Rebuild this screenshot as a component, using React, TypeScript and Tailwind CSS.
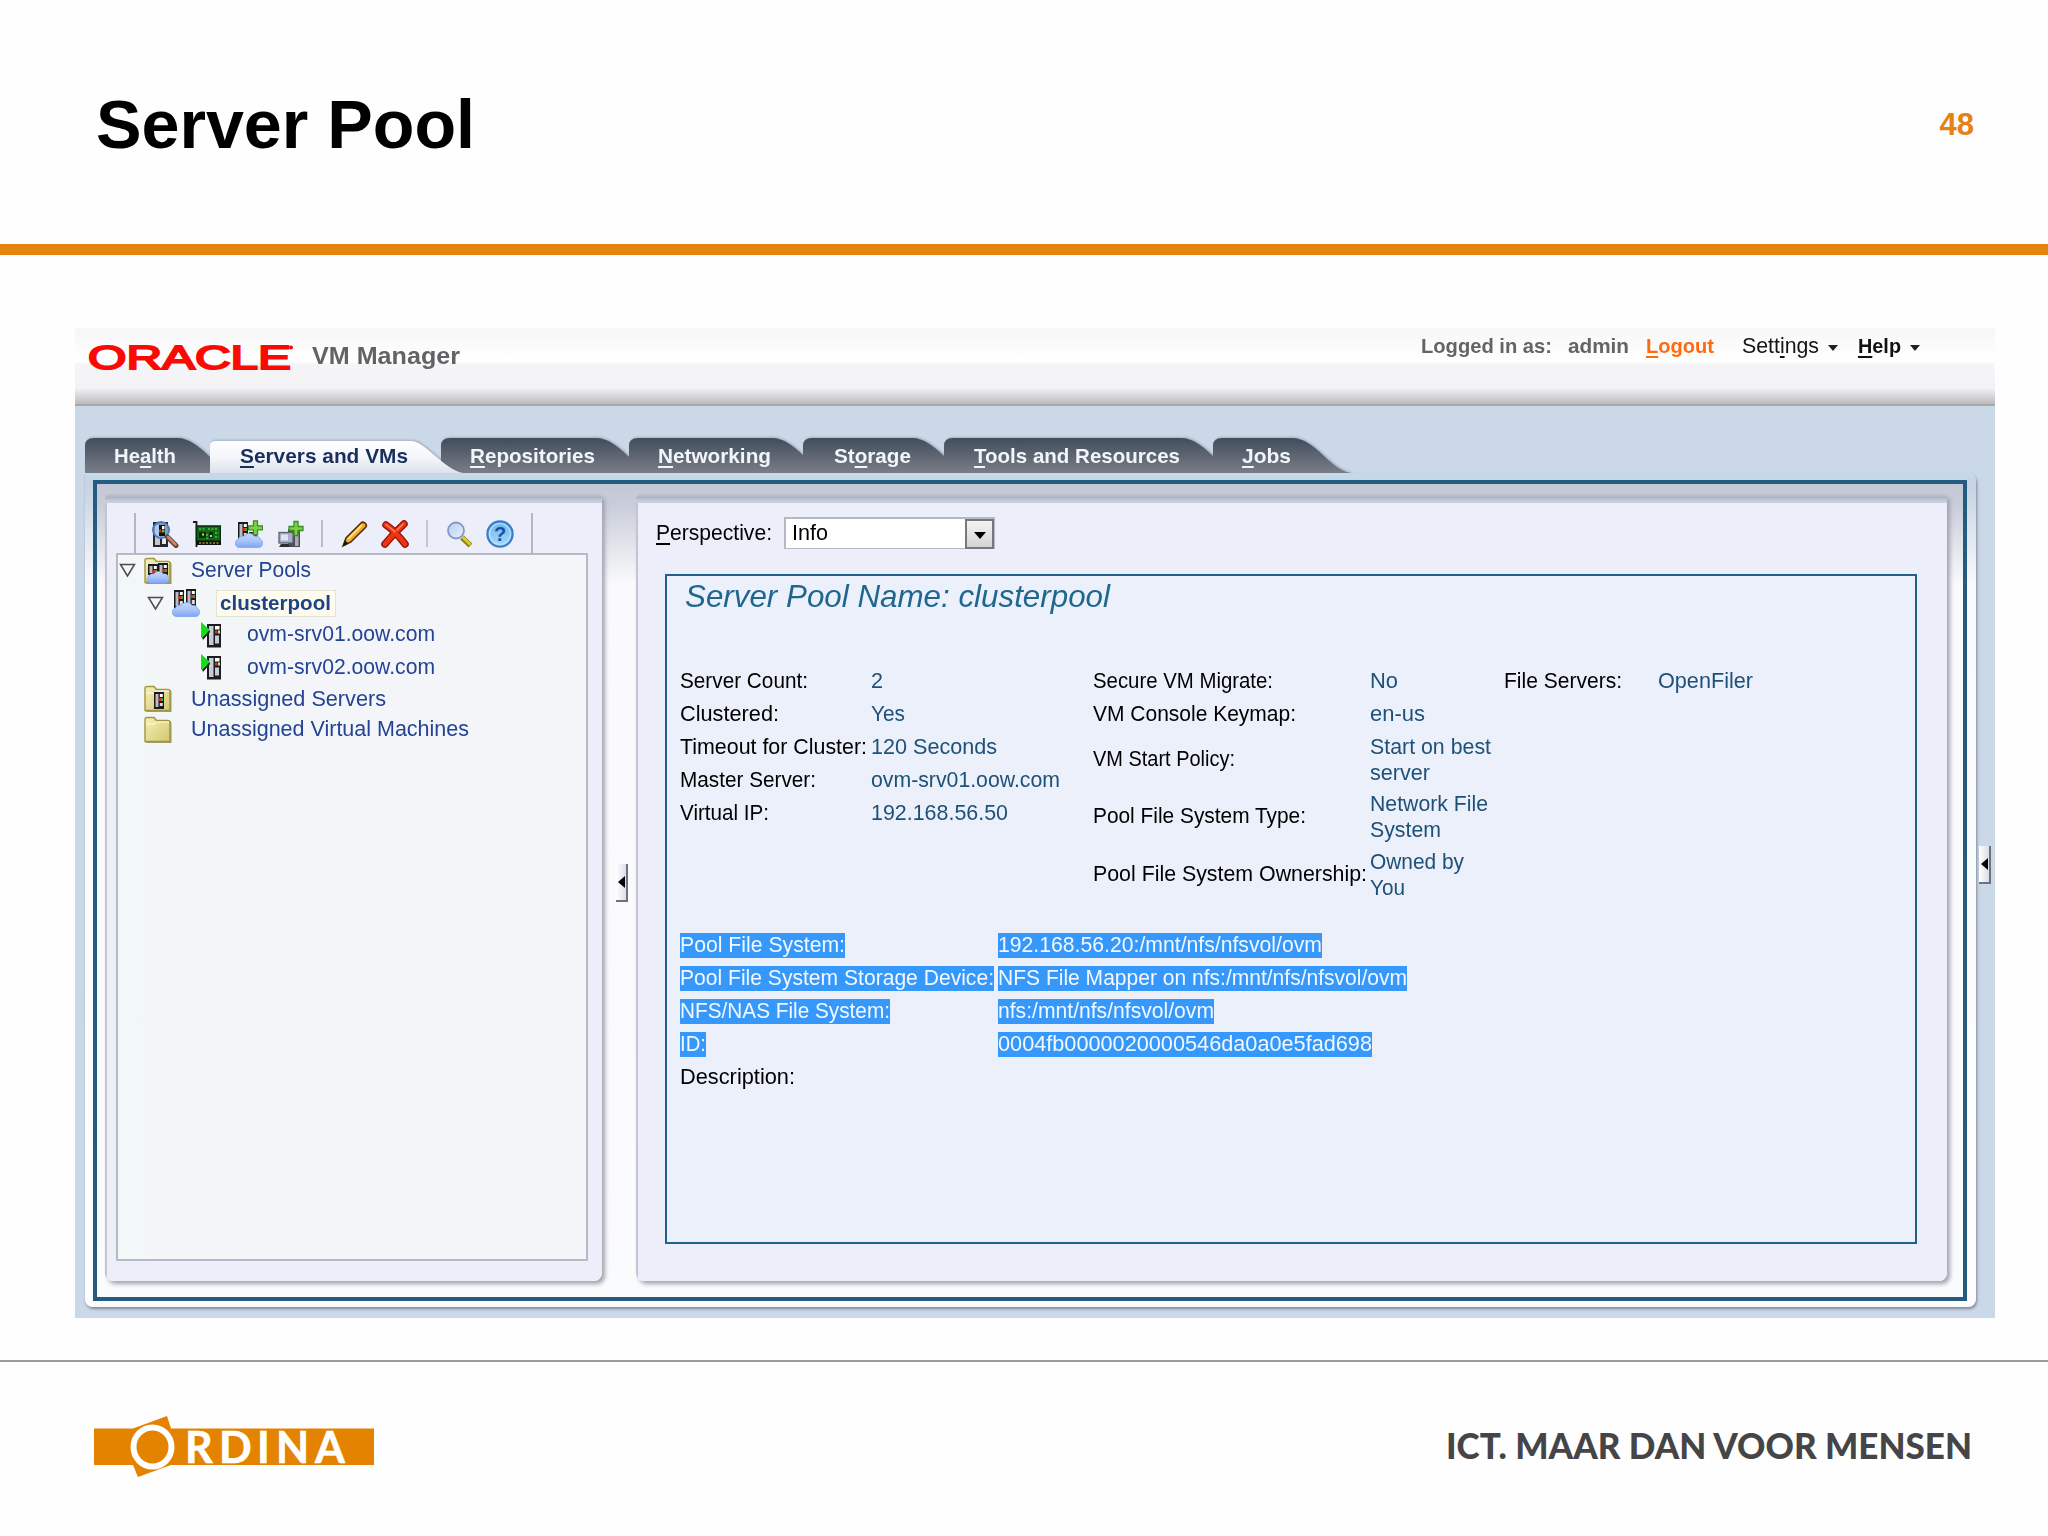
import { useLayoutEffect, useRef, useState, type ReactNode } from "react";
import clsx from "clsx";

/* Text condensed or widened to a given width. */
function Fit({ w, className, children }: { w: number; className?: string; children: ReactNode }) {
  const ref = useRef<HTMLSpanElement>(null);
  const [scale, setScale] = useState(1);
  useLayoutEffect(() => {
    const el = ref.current;
    if (!el) return;
    el.style.transform = "none";
    const next = w / (el.getBoundingClientRect().width || w);
    el.style.transform = `scaleX(${next})`;
    setScale(next);
  }, [w]);
  return (
    <span className={clsx("inline-block align-top whitespace-nowrap", className)} style={{ width: w }}>
      <span ref={ref} className="inline-block origin-left" style={{ transform: `scaleX(${scale})` }}>
        {children}
      </span>
    </span>
  );
}

function Key({ children }: { children: ReactNode }) {
  return <span className="underline decoration-2 underline-offset-[3px]">{children}</span>;
}

/* ---------- icons ---------- */

function Tower({ x, y, h = 22 }: { x: number; y: number; h?: number }) {
  return (
    <g>
      <rect x={x} y={y} width="10" height={h} fill="#1b1b1d" />
      <rect x={x + 1.5} y={y + 2} width="3" height={h - 4} fill="#b9bcc6" />
      <rect x={x + 5.8} y={y + 2} width="3" height="3" fill="#fff" />
      <rect x={x + 4.5} y={y + 6} width="2.5" height="3" fill="#e02a1c" />
      <rect x={x + 7} y={y + 6} width="2" height="3" fill="#2fae2a" />
      <rect x={x + 5.8} y={y + 11} width="3" height={Math.max(2, h - 14)} fill="#d8dae2" />
    </g>
  );
}

function Cloud({ y = 13.5 }: { y?: number }) {
  return (
    <path
      transform={`translate(0 ${y})`}
      d="M4.500 14C-.8 14 -.8 6.500 3.500 5.500C4 3 7 2 9 3C11 -1 18 -1 20 3C23 2 25 4 25 5.500C28.800 7 28.500 14 23.500 14Z"
      fill="url(#cloud)"
      stroke="#7fa3ec"
      strokeWidth=".8"
    />
  );
}

function Plus({ x, y }: { x: number; y: number }) {
  return (
    <path
      transform={`translate(${x} ${y})`}
      d="M5 0H9V5H14V9H9V14H5V9H0V5H5Z"
      fill="#7ed04a"
      stroke="#3c8f1e"
      strokeWidth="1.300"
    />
  );
}

function Folder({ children }: { children?: ReactNode }) {
  return (
    <svg width="28" height="28" viewBox="0 0 28 28" className="block shrink-0">
      <path d="M2 27V4Q2 2 4 2H10.500L13 5H25Q27.500 5 27.500 7V27Z" fill="#6f6a3c" opacity=".65" />
      <path d="M1 25.500V3.500Q1 1.500 3 1.500H10L12.500 4.500H24Q26 4.500 26 6.500V25.500Z" fill="url(#folder)" stroke="#a2963f" strokeWidth="1.400" />
      <path d="M2 8H10L12.500 6H25" fill="none" stroke="#fffde0" strokeWidth="1" />
      {children}
    </svg>
  );
}

function ServerRunning() {
  return (
    <svg width="22" height="26" viewBox="0 0 22 26" className="block shrink-0">
      <rect x="6" y="2" width="14" height="23.500" fill="#1d1d20" />
      <rect x="8" y="4" width="4.500" height="19" fill="#c9ccd6" />
      <rect x="14" y="4" width="4.500" height="3.500" fill="#fff" />
      <rect x="14" y="8.500" width="2.500" height="3" fill="#e02a1c" />
      <rect x="17" y="8.500" width="2" height="3" fill="#b7e8b0" />
      <rect x="14" y="13.500" width="4" height="8" fill="#c9ccd6" />
      <path d="M1 15.500L9 8V10L2 18Z" fill="#222" />
      <path d="M0 0L9 8L0 16Z" fill="#0fe01a" />
    </svg>
  );
}

function Expander() {
  return (
    <svg width="17" height="15" viewBox="0 0 17 15" className="block shrink-0">
      <path d="M1.500 1.500H15.500L8.500 13Z" fill="#f6f6f8" stroke="#4b4b50" strokeWidth="1.500" />
    </svg>
  );
}

function PoolIcon() {
  return (
    <svg width="28" height="28" viewBox="0 0 28 28" className="block shrink-0">
      <Tower x={2} y={1} h={18} />
      <Tower x={14} y={0} h={18} />
      <Cloud />
    </svg>
  );
}

function DiscoverIcon() {
  return (
    <svg width="28" height="28" viewBox="0 0 28 28" className="block">
      <rect x="2" y="2" width="15" height="25" fill="#27272a" />
      <rect x="4" y="5" width="5" height="20" fill="#c4c7d0" />
      <rect x="11" y="16" width="4" height="8" fill="#e8e8ec" />
      <circle cx="10" cy="10" r="8" fill="#a9c8f4" fillOpacity=".75" stroke="#4f79bd" strokeWidth="2" />
      <path d="M8 5H14V16H8Z" fill="#111" />
      <rect x="11" y="6" width="2.500" height="3" fill="#fff" />
      <rect x="8" y="9.500" width="2.500" height="3" fill="#e8261a" />
      <rect x="11" y="9.500" width="2.500" height="3" fill="#42c93a" />
      <path d="M16.500 17L25 25.500" stroke="#6b4130" strokeWidth="5" strokeLinecap="round" />
      <path d="M17 17L24.500 24.500" stroke="#c58a6c" strokeWidth="2.500" strokeLinecap="round" />
    </svg>
  );
}

function NicIcon() {
  return (
    <svg width="28" height="28" viewBox="0 0 28 28" className="block">
      <path d="M0 2H3.500V27" fill="none" stroke="#1c1c1c" strokeWidth="1.800" />
      <rect x="3.500" y="6" width="24" height="15" fill="#0f6b14" stroke="#0b2a0b" strokeWidth="1.500" />
      <rect x="3" y="21" width="25" height="4" fill="#111" />
      <path d="M6 23H26" stroke="#a58d2c" strokeWidth="1.500" strokeDasharray="2 1.500" />
      <rect x="6" y="12" width="7" height="6" fill="#0a2c0d" />
      <rect x="16" y="12" width="4" height="6" fill="#0a2c0d" />
      <path d="M6 9H12M15 9H25M22 13H26M22 17H26M14 14V19" stroke="#4fc44a" strokeWidth="1.500" strokeDasharray="2 1.500" />
      <rect x="9" y="13.500" width="2" height="2" fill="#e6d24a" />
      <rect x="17" y="15" width="2" height="2" fill="#c9ccd6" />
    </svg>
  );
}

function AddPoolIcon() {
  return (
    <svg width="28" height="28" viewBox="0 0 28 28" className="block">
      <Tower x={3} y={2} h={18} />
      <rect x="14" y="12" width="8" height="6" fill="#2a2a2d" />
      <Cloud />
      <Plus x={13.5} y={0.8} />
    </svg>
  );
}

function AddVmIcon() {
  return (
    <svg width="28" height="28" viewBox="0 0 28 28" className="block">
      <rect x="11" y="9" width="12" height="18" fill="#4c4f57" />
      <rect x="18" y="14" width="3.500" height="12" fill="#a9adb7" />
      <rect x="2" y="12.500" width="14" height="10.500" fill="#a9b1c8" stroke="#5d6272" strokeWidth="1.300" />
      <rect x="4" y="14.500" width="7" height="6" fill="#dfe4f2" />
      <path d="M2 27H13L11 24H4Z" fill="#2b2b30" />
      <Plus x={12} y={1.5} />
    </svg>
  );
}

function PencilIcon() {
  return (
    <svg width="28" height="28" viewBox="0 0 28 28" className="block">
      <path d="M2 26L5 18L20 3Q22 1 24.500 3.500Q26.500 5.500 24.500 7.500L10 22Z" fill="#f0a92c" stroke="#4a2a08" strokeWidth="1.500" />
      <path d="M7 19L21 5" stroke="#ffdc86" strokeWidth="2" />
      <path d="M2 26L4 20.500L7.500 23.500Z" fill="#1c1208" />
    </svg>
  );
}

function DeleteIcon() {
  return (
    <svg width="28" height="28" viewBox="0 0 28 28" className="block">
      <path d="M5 5Q14 11 24 24M23 4Q13 13 4 24" fill="none" stroke="#8f1005" strokeWidth="7.500" strokeLinecap="round" />
      <path d="M5 5Q14 11 24 24M23 4Q13 13 4 24" fill="none" stroke="#ee3312" strokeWidth="5" strokeLinecap="round" />
      <path d="M5 4.500Q11 9 14 12M22 4Q19 7 16 10" fill="none" stroke="#ff8466" strokeWidth="1.500" strokeLinecap="round" />
    </svg>
  );
}

function FindIcon() {
  return (
    <svg width="28" height="28" viewBox="0 0 28 28" className="block">
      <path d="M16 17.500L24.500 25.500" stroke="#8d8416" strokeWidth="5.500" />
      <path d="M16.500 17L24.500 24.500" stroke="#d9cb35" strokeWidth="3" />
      <circle cx="10" cy="10.500" r="8" fill="url(#lens)" stroke="#8798be" strokeWidth="1.800" />
    </svg>
  );
}

function HelpIcon() {
  return (
    <svg width="28" height="28" viewBox="0 0 28 28" className="block">
      <circle cx="14" cy="14" r="12.600" fill="url(#help)" stroke="#3a7cc8" strokeWidth="2.200" />
      <circle cx="14" cy="14" r="10.500" fill="none" stroke="#bfe2fb" strokeWidth="1.200" />
      <text x="14" y="21" textAnchor="middle" fontFamily="Liberation Sans, sans-serif" fontWeight="700" fontSize="20" fill="#1752a8">?</text>
    </svg>
  );
}

function Defs() {
  return (
    <svg width="0" height="0" className="absolute">
      <defs>
        <linearGradient id="cloud" x1="0" y1="0" x2="0" y2="1">
          <stop offset="0" stopColor="#c6d8fb" />
          <stop offset=".5" stopColor="#a9c5fb" />
          <stop offset="1" stopColor="#7fa6f4" />
        </linearGradient>
        <linearGradient id="folder" x1="0" y1="0" x2="1" y2="1">
          <stop offset="0" stopColor="#f5f1b8" />
          <stop offset="1" stopColor="#d2c670" />
        </linearGradient>
        <linearGradient id="lens" x1="0" y1="0" x2="1" y2="1">
          <stop offset="0" stopColor="#b4cbf2" />
          <stop offset="1" stopColor="#eaf3fe" />
        </linearGradient>
        <linearGradient id="help" x1="0" y1="0" x2="0" y2="1">
          <stop offset="0" stopColor="#6fb4ee" />
          <stop offset="1" stopColor="#9fdcfb" />
        </linearGradient>
        <linearGradient id="tab" x1="0" y1="0" x2="0" y2="1">
          <stop offset="0" stopColor="#414d5c" />
          <stop offset="1" stopColor="#7a7d88" />
        </linearGradient>
        <linearGradient id="tabOn" x1="0" y1="0" x2="0" y2="1">
          <stop offset="0" stopColor="#ffffff" />
          <stop offset=".5" stopColor="#f4f6fa" />
          <stop offset="1" stopColor="#dde2ec" />
        </linearGradient>
      </defs>
    </svg>
  );
}

/* ---------- top bar and tabs ---------- */

function Caret() {
  return <span className="mt-[3px] ml-[9px] block h-0 w-0 shrink-0 border-x-[5px] border-t-[6px] border-x-transparent border-t-[#222]" />;
}

function TopBar() {
  return (
    <div className="flex h-[78px] shrink-0 items-start bg-[linear-gradient(to_bottom,#f7f7f9_0px,#ffffff_34px,#f5f4f6_36px,#f3f2f5_60px,#bcbabd_76px,#a5aaa8_76px,#a5aaa8_78px)]">
      <svg width="208" height="44" viewBox="0 0 208 44" className="mt-[8px] ml-[12px] block overflow-visible">
        <text
          x="1"
          y="33"
          textLength="203"
          lengthAdjust="spacingAndGlyphs"
          fontFamily="Liberation Sans, sans-serif"
          fontSize="33"
          fill="#fb0a05"
          stroke="#fb0a05"
          strokeWidth="1.900"
        >
          ORACLE
        </text>
        <circle cx="204" cy="11.500" r="2" fill="#fb0a05" />
      </svg>
      <Fit w={148} className="mt-[10px] ml-[17px] text-[24.5px] leading-9 font-bold text-[#636366]">VM Manager</Fit>
      <div className="ml-auto flex h-9 w-[574px] items-center text-[21px] font-bold text-[#646467]">
        <Fit w={131}>Logged in as:</Fit>
        <Fit w={61} className="ml-[16px]">admin</Fit>
        <Fit w={68} className="ml-[17px] text-[#ff6a0f]"><Key>L</Key>ogout</Fit>
        <Fit w={77} className="ml-[28px] text-[21.5px] font-normal text-[#151517]">Sett<Key>i</Key>ngs</Fit>
        <Caret />
        <Fit w={43} className="ml-[20px] text-[#111]"><Key>H</Key>elp</Fit>
        <Caret />
      </div>
    </div>
  );
}

type TabSpec = { pre?: string; key: string; post: string; width: number; textX: number; textW: number; on?: boolean };

const tabs: TabSpec[] = [
  { pre: "He", key: "a", post: "lth", width: 125, textX: 29, textW: 62 },
  { key: "S", post: "ervers and VMs", width: 231, textX: 30, textW: 168, on: true },
  { key: "R", post: "epositories", width: 188, textX: 29, textW: 125 },
  { key: "N", post: "etworking", width: 174, textX: 29, textW: 113 },
  { pre: "St", key: "o", post: "rage", width: 141, textX: 31, textW: 77 },
  { key: "T", post: "ools and Resources", width: 269, textX: 30, textW: 206 },
  { key: "J", post: "obs", width: 139, textX: 29, textW: 49 },
];

function Tab({ tab }: { tab: TabSpec }) {
  const c = tab.textX + tab.textW + 1;
  const y = tab.on ? 3 : 0;
  const d = tab.on
    ? `M0 35V${y + 5}Q0 ${y} 6 ${y}H${c + 2}C${c + 16} ${y} ${c + 34} 31 ${c + 54} 35Z`
    : `M0 35V8Q0 0 9 0H${c}C${c + 24} 0 ${c + 38} 33 ${c + 60} 35Z`;
  return (
    <button
      type="button"
      style={{ width: tab.width, paddingLeft: tab.textX }}
      className={clsx(
        "relative flex h-[35px] shrink-0 items-center text-[21px] font-bold",
        tab.on ? "z-10 text-[#1a2f5c]" : "text-[#f2f6fa]",
      )}
    >
      <svg width={c + 60} height="35" className="absolute top-0 left-0 block drop-shadow-[1px_-1px_1px_rgba(90,100,120,0.35)]">
        <path d={d} fill={tab.on ? "url(#tabOn)" : "url(#tab)"} />
      </svg>
      <Fit w={tab.textW} className="relative text-left">
        {tab.pre}
        <Key>{tab.key}</Key>
        {tab.post}
      </Fit>
    </button>
  );
}

/* ---------- navigation tree ---------- */

function Toolbar() {
  return (
    <div className="flex h-[50px] items-end pl-[27px]">
      <div className="flex h-[40px] w-[399px] items-start border-x-2 border-[#b3b7c4] pt-[7px] pl-[15px]">
        <DiscoverIcon />
        <span className="ml-[14px]"><NicIcon /></span>
        <span className="ml-[14px]"><AddPoolIcon /></span>
        <span className="ml-[14px]"><AddVmIcon /></span>
        <span className="ml-[16px] h-[27px] w-[2px] bg-[#b9bdca]" />
        <span className="ml-[18px]"><PencilIcon /></span>
        <span className="ml-[12px]"><DeleteIcon /></span>
        <span className="ml-[17px] h-[27px] w-[2px] bg-[#c3c6d2]" />
        <span className="ml-[18px]"><FindIcon /></span>
        <span className="ml-[12px]"><HelpIcon /></span>
      </div>
    </div>
  );
}

function Tree() {
  return (
    <div className="ml-[9px] h-[708px] w-[472px] border-2 border-[#b7bac4] bg-[#f4f5f9] bg-[linear-gradient(to_right,#f2f7f7,#f4f5f9_60%)] text-[21.5px] text-[#244394]">
      <div className="flex h-[31px] items-center pl-px">
        <Expander />
        <span className="ml-[8px] pt-px">
          <Folder>
            <Tower x={4} y={7} h={11} />
            <Tower x={14} y={6} h={12} />
            <g transform="translate(2.500 3.500) scale(.82)"><Cloud /></g>
          </Folder>
        </span>
        <Fit w={120} className="ml-[19px]">Server Pools</Fit>
      </div>
      <div className="flex h-[34px] items-center pl-[29px]">
        <Expander />
        <span className="ml-[8px]"><PoolIcon /></span>
        <span className="ml-[16px] flex h-[27px] w-[120px] items-center border border-[#e4e2d6] bg-[#fcfbee] pl-[3px] text-[#1d4385]">
          <Fit w={111} className="text-[21px] font-bold">clusterpool</Fit>
        </span>
      </div>
      <div className="flex h-[29px] items-center pl-[83px]">
        <ServerRunning />
        <Fit w={188} className="ml-[24px]">ovm-srv01.oow.com</Fit>
      </div>
      <div className="flex h-[36px] items-center pl-[83px]">
        <ServerRunning />
        <Fit w={188} className="ml-[24px]">ovm-srv02.oow.com</Fit>
      </div>
      <div className="flex h-[28px] items-center pl-[26px]">
        <Folder><Tower x={10} y={7} h={17} /></Folder>
        <Fit w={195} className="ml-[19px]">Unassigned Servers</Fit>
      </div>
      <div className="flex h-[33px] items-center pl-[26px]">
        <Folder />
        <Fit w={278} className="ml-[19px]">Unassigned Virtual Machines</Fit>
      </div>
    </div>
  );
}

/* ---------- details ---------- */

function Value({ lines }: { lines: [string, number][] }) {
  return (
    <div className={clsx("flex flex-col leading-[26px] text-[#1f5078]", lines.length > 1 && "pt-[2px]")}>
      {lines.map(([text, w]) => (
        <div key={text} className="h-[26px]"><Fit w={w}>{text}</Fit></div>
      ))}
    </div>
  );
}

type Row = { label: string; w: number; value: [string, number][] };

const general: Row[] = [
  { label: "Server Count:", w: 128, value: [["2", 12]] },
  { label: "Clustered:", w: 99, value: [["Yes", 34]] },
  { label: "Timeout for Cluster:", w: 187, value: [["120 Seconds", 126]] },
  { label: "Master Server:", w: 136, value: [["ovm-srv01.oow.com", 189]] },
  { label: "Virtual IP:", w: 89, value: [["192.168.56.50", 137]] },
];

const policy: Row[] = [
  { label: "Secure VM Migrate:", w: 180, value: [["No", 28]] },
  { label: "VM Console Keymap:", w: 203, value: [["en-us", 55]] },
  { label: "VM Start Policy:", w: 142, value: [["Start on best", 121], ["server", 60]] },
  { label: "Pool File System Type:", w: 213, value: [["Network File", 118], ["System", 71]] },
  { label: "Pool File System Ownership:", w: 274, value: [["Owned by", 94], ["You", 35]] },
];

const selected = [
  { label: "Pool File System:", w: 165, value: "192.168.56.20:/mnt/nfs/nfsvol/ovm", vw: 324 },
  { label: "Pool File System Storage Device:", w: 314, value: "NFS File Mapper on nfs:/mnt/nfs/nfsvol/ovm", vw: 409 },
  { label: "NFS/NAS File System:", w: 210, value: "nfs:/mnt/nfs/nfsvol/ovm", vw: 216 },
  { label: "ID:", w: 26, value: "0004fb0000020000546da0a0e5fad698", vw: 374 },
];

function Details() {
  return (
    <div className="ml-[27px] h-[670px] w-[1252px] border-2 border-[#1f6189] bg-[#ebf0fb] text-[21.5px] leading-[26px] text-black">
      <h2 className="pl-[18px] text-[30.5px] leading-[40px] text-[#1f678f] italic">
        <Fit w={425}>Server Pool Name: clusterpool</Fit>
      </h2>
      <div className="mt-[48px] flex pl-[13px]">
        <div className="w-[413px]">
          {general.map((r) => (
            <div key={r.label} className="flex h-[33px] items-center">
              <div className="w-[191px]"><Fit w={r.w}>{r.label}</Fit></div>
              <Value lines={r.value} />
            </div>
          ))}
        </div>
        <div className="w-[411px]">
          {policy.map((r) => (
            <div key={r.label} className={clsx("flex items-center", r.value.length > 1 ? "h-[57.5px]" : "h-[33px]")}>
              <div className="w-[277px]"><Fit w={r.w}>{r.label}</Fit></div>
              <Value lines={r.value} />
            </div>
          ))}
        </div>
        <div className="flex h-[33px] items-center">
          <div className="w-[154px]"><Fit w={118}>File Servers:</Fit></div>
          <Value lines={[["OpenFiler", 95]]} />
        </div>
      </div>
      <div className="mt-[26px] pl-[13px]">
        {selected.map((r) => (
          <div key={r.label} className="flex h-[33px] items-center leading-[25px] text-[#f2f8ff]">
            <div className="h-[25px] w-[318px]"><Fit w={r.w} className="h-[25px] bg-[#3698fb]">{r.label}</Fit></div>
            <Fit w={r.vw} className="h-[25px] bg-[#3698fb]">{r.value}</Fit>
          </div>
        ))}
        <div className="flex h-[33px] items-center"><Fit w={115}>Description:</Fit></div>
      </div>
    </div>
  );
}

function Handle() {
  return (
    <div className="flex h-[38px] w-[12px] items-center justify-center border-r-2 border-b-2 border-[#6f727c] bg-[linear-gradient(to_right,#ffffff,#d9deea)]">
      <span className="h-0 w-0 border-y-[6px] border-r-[7px] border-y-transparent border-r-black" />
    </div>
  );
}

function Panel({ className, children }: { className: string; children: ReactNode }) {
  return (
    <div className={clsx("flex h-[787px] shrink-0 flex-col overflow-hidden rounded-[8px] rounded-t-[5px] shadow-[3px_3px_4px_#a2a3b0]", className)}>
      <div className="h-[9px] shrink-0 bg-[linear-gradient(to_bottom,#c0c4d1,#aeb4c1_35%,#c8cfdc_80%)]" />
      <div className="grow border-l-2 border-[#c3c5d0] bg-[#eceffa]">{children}</div>
    </div>
  );
}

function Workspace() {
  return (
    <div className="relative ml-[10px] h-[834px] w-[1891px] rounded-[8px] rounded-tl-none bg-[linear-gradient(to_bottom,#c3dcea_0px,#c6d3e2_12px,#f9fafd_110px,#fdfdfe)] pt-[7px] pl-[8px] shadow-[1px_2px_3px_#7f8796]">
      <div className="flex h-[821px] w-[1874px] items-start border-4 border-[#245b80] bg-[linear-gradient(to_bottom,#c4c8d6_0px,#c9cdd9_20px,#fafafc_100px,#fafbfd)] pt-[10px]">
        <Panel className="ml-[8px] w-[497px]">
          <Toolbar />
          <Tree />
        </Panel>
        <div className="mt-[370px] ml-[14px] w-[12px] shrink-0"><Handle /></div>
        <Panel className="ml-[8px] w-[1311px]">
          <div className="flex h-[71px] items-start pt-[14px] pl-[18px] text-[21.5px] text-black">
            <Fit w={116} className="pt-px leading-[31px]"><Key>P</Key>erspective:</Fit>
            <div className="ml-[12px] flex h-[32px] w-[211px] items-center justify-between border-2 border-r border-b border-[#b4b7c4] bg-white pl-[6px]">
              <Fit w={36}>Info</Fit>
              <span className="flex h-[30px] w-[29px] items-center justify-center border-2 border-[#77787c] bg-[linear-gradient(to_bottom,#f4f4f4,#d4d4d4)] pt-[3px]">
                <span className="h-0 w-0 border-x-[6px] border-t-[7px] border-x-transparent border-t-black" />
              </span>
            </div>
          </div>
          <Details />
        </Panel>
      </div>
      <div className="absolute top-[373px] left-[1894px]"><Handle /></div>
    </div>
  );
}

/* ---------- slide ---------- */

function OrdinaLogo() {
  return (
    <svg width="280" height="64" viewBox="0 0 280 64" className="block">
      <path d="M0 13.500H280V50H0Z" fill="#e48300" />
      <path d="M39 13.500L73 1L77 13.500V50L44 62L39 50Z" fill="#e48300" />
      <ellipse cx="58.500" cy="32" rx="19" ry="19.500" fill="#e48300" stroke="#fff" strokeWidth="6" />
      <text y="48" x="91 125 163 182 221" fontFamily="Lato, sans-serif" fontWeight="700" fontSize="43" fill="#fff" stroke="#fff" strokeWidth=".6">RDINA</text>
    </svg>
  );
}

export default function App() {
  return (
    <div className="flex h-[1536px] w-[2048px] flex-col overflow-hidden bg-[#fefefe] font-['Liberation_Sans',Arial,sans-serif]">
      <Defs />
      <header className="flex h-[244px] shrink-0 items-start justify-between pt-[84px] pr-[74px] pl-[96px]">
        <h1 className="text-[68px] leading-[80px] font-bold text-black"><Fit w={379}>Server Pool</Fit></h1>
        <span className="mt-[23px] text-[31px] leading-[36px] font-bold text-[#e48312]">48</span>
      </header>
      <div className="h-[11px] shrink-0 bg-[#e6830a]" />
      <main className="mt-[73px] ml-[75px] flex h-[990px] w-[1920px] shrink-0 flex-col bg-[#cbd8e8]">
        <TopBar />
        <nav className="mt-[32px] flex h-[35px] shrink-0 pl-[10px]">
          {tabs.map((t) => (
            <Tab key={t.key} tab={t} />
          ))}
        </nav>
        <Workspace />
      </main>
      <footer className="mt-[42px] flex grow items-start justify-between border-t-2 border-[#9b9b9e] pt-[53px] pr-[72px] pl-[94px]">
        <OrdinaLogo />
        <svg width="532" height="50" viewBox="0 0 532 50" className="mt-[6px] block overflow-visible">
          <text x="2" y="38" textLength="526" lengthAdjust="spacingAndGlyphs" fontFamily="Lato, sans-serif" fontWeight="900" fontSize="36" fill="#454548">
            ICT. MAAR DAN VOOR MENSEN
          </text>
        </svg>
      </footer>
    </div>
  );
}
